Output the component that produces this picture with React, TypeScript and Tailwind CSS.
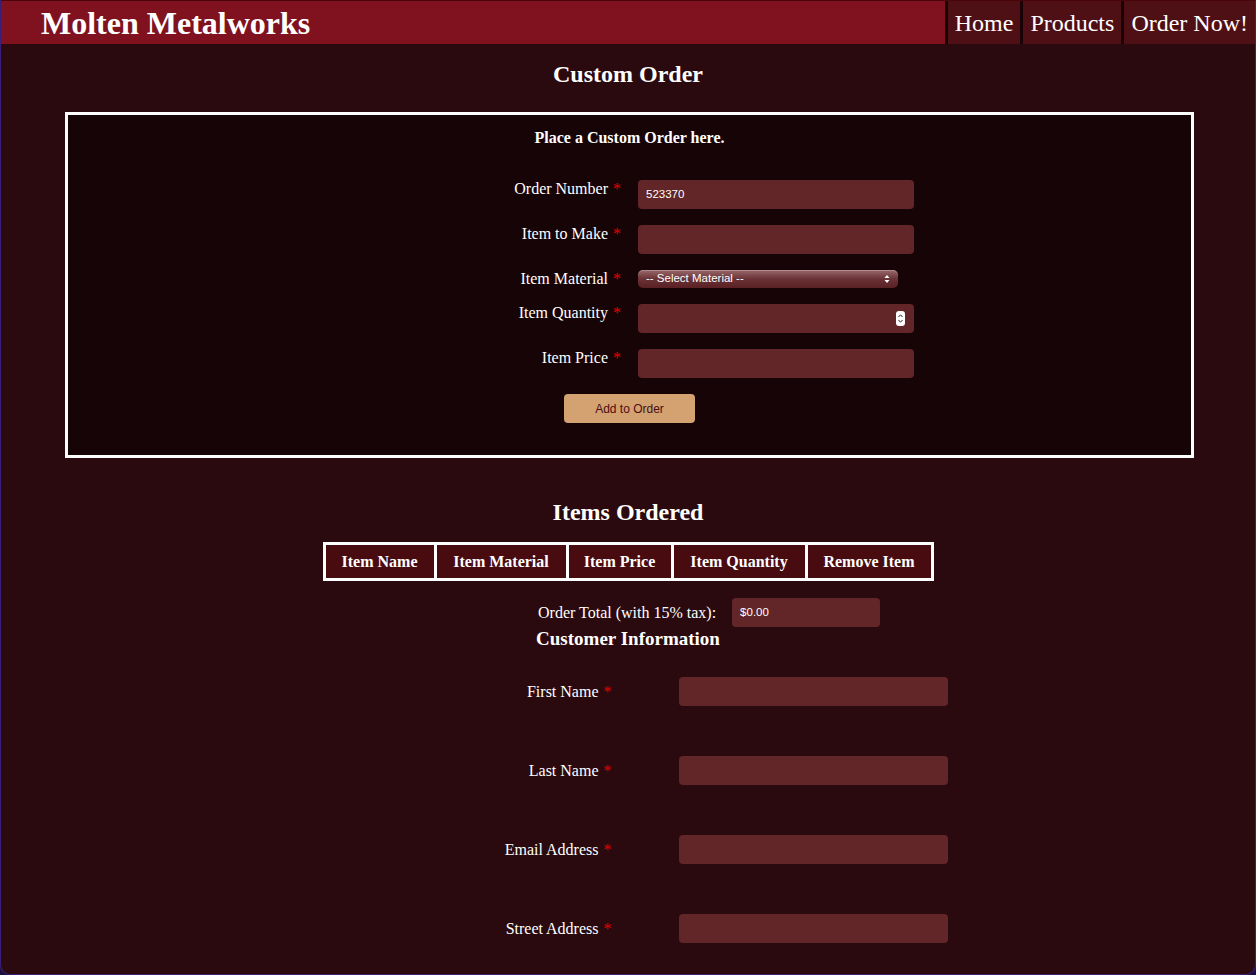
import React from 'react';

const serif = { fontFamily: '"Liberation Serif", "Times New Roman", serif' };
const sans = { fontFamily: '"Liberation Sans", Arial, sans-serif' };

function Star() {
  return <span className="text-[#e50000] ml-[5px]">*</span>;
}

function TextBox({ value, w = 'w-[276px]' }: { value?: string; w?: string }) {
  return (
    <div
      className={`${w} h-[29px] rounded-[4px] bg-[#622628] text-white text-[11.5px] flex items-center px-[8px]`}
      style={sans}
    >
      {value}
    </div>
  );
}

function OrderRow({ label, children }: { label: string; children: React.ReactNode }) {
  return (
    <div className="flex items-start gap-[17px]">
      <div className="w-[276px] text-right text-[16px] leading-[17px] text-white">
        {label}
        <Star />
      </div>
      {children}
    </div>
  );
}

function CustomerRow({ label }: { label: string }) {
  return (
    <div className="flex items-center gap-[67px]">
      <div className="w-[303px] text-right text-[16px] text-white">
        {label}
        <Star />
      </div>
      <TextBox w="w-[269px]" />
    </div>
  );
}

export default function App() {
  const columns = [
    { name: 'Item Name', w: 'w-[108px]' },
    { name: 'Item Material', w: 'w-[132px]' },
    { name: 'Item Price', w: 'w-[105px]' },
    { name: 'Item Quantity', w: 'w-[134px]' },
    { name: 'Remove Item', w: 'w-[126px]' },
  ];

  return (
    <div className="h-screen bg-[#1c1040] overflow-hidden" style={serif}>
      <div className="h-[975px] bg-[#2a0a0e] rounded-b-[10px] border-x border-b border-[#3a1f7a] overflow-hidden">
        <header className="h-[44px] bg-[#7f121e] border-t border-[#4a050b] flex items-stretch justify-between">
          <h1 className="pl-[40px] text-[32px] font-bold text-white leading-[44px]">Molten Metalworks</h1>
          <nav className="flex">
            {['Home', 'Products', 'Order Now!'].map((n) => (
              <div
                key={n}
                className="bg-[#4f1015] border-l-[3px] border-[#1a0306] px-[7px] text-[24px] text-white flex items-center"
              >
                {n}
              </div>
            ))}
          </nav>
        </header>

        <h2 className="text-center text-white font-bold text-[24px] mt-[16px] leading-[28px]">Custom Order</h2>

        <section className="ml-[64px] mr-[61px] mt-[24px] border-[3px] border-white bg-[#170406] pt-[14px] pb-[32px] flex flex-col items-center">
          <p className="text-white font-bold text-[16px] leading-[18px]">Place a Custom Order here.</p>
          <div className="mt-[33px] flex flex-col gap-[16px]">
            <OrderRow label="Order Number">
              <TextBox value="523370" />
            </OrderRow>
            <OrderRow label="Item to Make">
              <TextBox />
            </OrderRow>
            <OrderRow label="Item Material">
              <div
                className="w-[260px] h-[18px] rounded-[5px] bg-gradient-to-b from-[#9a6a6c] via-[#6a3236] to-[#5a2024] text-white text-[11.5px] flex items-center justify-between px-[8px] shadow-[inset_0_1px_0_rgba(255,255,255,0.25)]"
                style={sans}
              >
                <span>-- Select Material --</span>
                <svg width="6" height="10" viewBox="0 0 6 10">
                  <path d="M3 1 L5.5 4 H0.5 Z M3 9 L5.5 6 H0.5 Z" fill="#fff" />
                </svg>
              </div>
            </OrderRow>
            <OrderRow label="Item Quantity">
              <div className="w-[276px] h-[29px] rounded-[4px] bg-[#622628] flex items-center justify-end pr-[9px]">
                <div className="w-[9px] h-[15px] rounded-[3px] bg-white flex items-center justify-center">
                  <svg width="7" height="13" viewBox="0 0 7 13">
                    <path d="M1.5 5 L3.5 2.8 L5.5 5 M1.5 8 L3.5 10.2 L5.5 8" stroke="#4a1a1c" strokeWidth="1" fill="none" />
                  </svg>
                </div>
              </div>
            </OrderRow>
            <OrderRow label="Item Price">
              <TextBox />
            </OrderRow>
          </div>
          <button
            className="mt-[16px] w-[131px] h-[29px] rounded-[4px] bg-[#d4a171] text-[#4a0f14] text-[12px]"
            style={sans}
          >
            Add to Order
          </button>
        </section>

        <h2 className="text-center text-white font-bold text-[24px] mt-[40px] leading-[28px]">Items Ordered</h2>

        <div className="mt-[16px] flex justify-center">
          <div className="flex border-[3px] border-white">
            {columns.map((c, i) => (
              <div
                key={c.name}
                className={`${c.w} h-[33px] bg-[#480b10] text-white font-bold text-[16px] flex items-center justify-center ${
                  i > 0 ? 'border-l-[3px] border-white' : ''
                }`}
              >
                {c.name}
              </div>
            ))}
          </div>
        </div>

        <div className="mt-[17px] ml-[537px] flex items-center gap-[16px]">
          <span className="text-white text-[16px]">Order Total (with 15% tax):</span>
          <TextBox value="$0.00" w="w-[148px]" />
        </div>

        <h3 className="text-center text-white font-bold text-[19px] leading-[22px] mt-[1px]">Customer Information</h3>

        <div className="mt-[27px] flex flex-col items-center gap-[50px]">
          <CustomerRow label="First Name" />
          <CustomerRow label="Last Name" />
          <CustomerRow label="Email Address" />
          <CustomerRow label="Street Address" />
        </div>
      </div>
    </div>
  );
}
